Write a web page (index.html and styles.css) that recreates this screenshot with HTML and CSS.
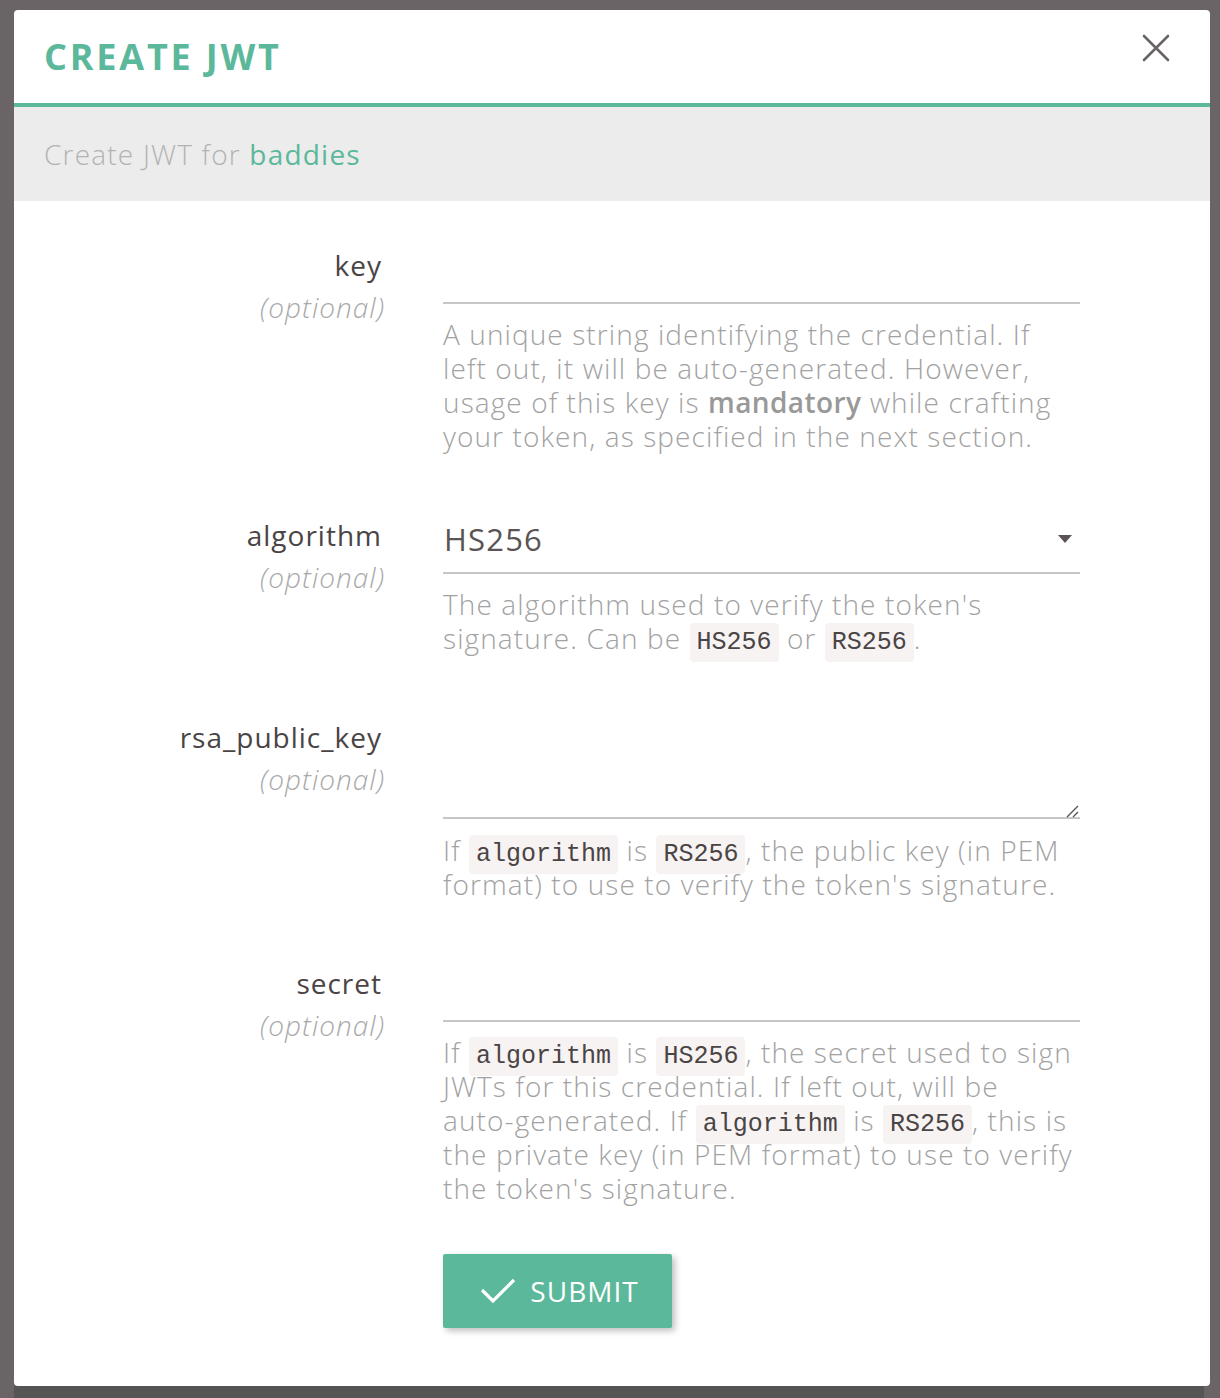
FILE: index.html
```html
<!DOCTYPE html>
<html lang="en">
<head>
<meta charset="utf-8">
<title>Create JWT</title>
<link rel="stylesheet" href="styles.css">
</head>
<body>
<div class="backdrop">
  <div class="modal">
    <header class="modal-head">
      <h1 class="modal-title">CREATE JWT</h1>
      <button class="close" type="button" aria-label="Close">
        <svg width="28" height="28" viewBox="0 0 28 28"><path d="M2 2 L26 26 M26 2 L2 26" stroke="#6a6466" stroke-width="2.6" stroke-linecap="round" fill="none"/></svg>
      </button>
    </header>
    <div class="modal-sub">Create JWT for <strong>baddies</strong></div>
    <form class="modal-body">
      <div class="field">
        <div class="label"><div class="name">key</div><div class="opt">(optional)</div></div>
        <div class="control">
          <input class="input" type="text">
          <p class="help">A unique string identifying the credential. If left out, it will be <span class="nw">auto-generated.</span> However, usage of this key is <b>mandatory</b> while crafting your token, as specified in the next section.</p>
        </div>
      </div>
      <div class="field">
        <div class="label"><div class="name">algorithm</div><div class="opt">(optional)</div></div>
        <div class="control">
          <div class="select"><span>HS256</span><svg class="caret" width="14" height="8" viewBox="0 0 14 8"><path d="M0 0 H14 L7 8 Z" fill="#5a5454"/></svg></div>
          <p class="help">The algorithm used to verify the token's signature. Can be <code>HS256</code> or <code>RS256</code>.</p>
        </div>
      </div>
      <div class="field">
        <div class="label"><div class="name">rsa_public_key</div><div class="opt">(optional)</div></div>
        <div class="control">
          <div class="textarea-wrap">
            <textarea class="textarea"></textarea>
            <svg class="grip" width="14" height="14" viewBox="0 0 14 14"><path d="M13 2 L2 13 M13 8 L8 13" stroke="#555" stroke-width="1.4" fill="none"/></svg>
          </div>
          <p class="help">If <code>algorithm</code> is <code>RS256</code>, the public key (in PEM format) to use to verify the token's signature.</p>
        </div>
      </div>
      <div class="field">
        <div class="label"><div class="name">secret</div><div class="opt">(optional)</div></div>
        <div class="control">
          <input class="input" type="text">
          <p class="help">If <code>algorithm</code> is <code>HS256</code>, the secret used to sign JWTs for this credential. If left out, will be <span class="nw">auto-generated.</span> If <code>algorithm</code> is <code>RS256</code>, this is the private key (in PEM format) to use to verify the token's signature.</p>
        </div>
      </div>
      <div class="actions">
        <button class="submit" type="button">
          <svg width="36" height="28" viewBox="0 0 36 28"><path d="M2 13 L13 24 L34 3" stroke="#fff" stroke-width="3.2" fill="none"/></svg>
          <span>SUBMIT</span>
        </button>
      </div>
    </form>
  </div>
  <div class="bottom-strip"></div>
</div>
</body>
</html>
```
FILE: styles.css
```css
html, body {
  margin: 0;
  padding: 0;
}
body {
  background: #6b6466;
  height: 1398px;
  overflow: hidden;
  font-family: "Open Sans", Lato, sans-serif;
}
.backdrop {
  padding: 10px 10px 0 14px;
}
.modal {
  background: #fff;
  width: 1196px;
  height: 1376px;
  border-radius: 4px;
  overflow: hidden;
  box-sizing: border-box;
}
.bottom-strip {
  height: 12px;
  background: #555555;
  margin-right: 6px;
}
.modal-head {
  height: 97px;
  box-sizing: border-box;
  border-bottom: 4px solid #5bb89b;
  padding: 0 40px 0 30px;
  display: flex;
  justify-content: space-between;
  align-items: center;
}
.modal-title {
  margin: 0;
  font-family: "Open Sans", sans-serif;
  font-weight: 700;
  font-size: 36px;
  letter-spacing: 2.8px;
  color: #5bb89b;
  line-height: 1;
}
.close {
  align-self: flex-start;
  margin-top: 24px;
  padding: 0;
  border: 0;
  background: none;
  width: 28px;
  height: 28px;
  display: block;
}
.close svg { display: block; }
.modal-sub {
  height: 94px;
  background: #ececec;
  padding-left: 30px;
  display: flex;
  align-items: center;
  font-size: 28px;
  font-weight: 300;
  letter-spacing: 1.2px;
  color: #b3b3b3;
  white-space: pre;
}
.modal-sub strong {
  color: #5bb89b;
  font-weight: 500;
}
.modal-body {
  padding: 43px 0 60px;
}
.field {
  display: grid;
  grid-template-columns: 368px 637px;
  column-gap: 61px;
}
.field + .field {
  margin-top: 61px;
}
.label {
  text-align: right;
  font-size: 28px;
  line-height: 42px;
  letter-spacing: 1px;
}
.name {
  color: #4a4445;
  font-weight: 500;
}
.opt {
  color: #a9a9a9;
  font-style: italic;
  font-weight: 300;
  margin-right: -3px;
}
.control {
  min-width: 0;
}
.input {
  display: block;
  width: 100%;
  height: 60px;
  box-sizing: border-box;
  border: 0;
  border-bottom: 2px solid #c6c6c6;
  padding: 0;
  margin: 0;
  font: inherit;
  outline: none;
  background: transparent;
}
.select {
  height: 60px;
  box-sizing: border-box;
  border-bottom: 2px solid #c6c6c6;
  padding: 0 8px 8px 1px;
  display: flex;
  align-items: center;
  justify-content: space-between;
  font-size: 31px;
  letter-spacing: 1.2px;
  color: #5a5454;
}
.caret { display: block; }
.textarea-wrap {
  position: relative;
}
.textarea {
  display: block;
  width: 100%;
  height: 103px;
  box-sizing: border-box;
  border: 0;
  border-bottom: 2px solid #c6c6c6;
  padding: 0;
  margin: 0;
  resize: none;
  outline: none;
  font: inherit;
}
.grip {
  position: absolute;
  right: 1px;
  bottom: 1px;
}
.help {
  margin: 13px 0 0;
  font-size: 28px;
  line-height: 34px;
  font-weight: 300;
  letter-spacing: 1.1px;
  color: #a2a2a2;
}
.nw { white-space: nowrap; }
.textarea-wrap + .help {
  margin-top: 14px;
}
.help b {
  font-weight: 600;
  color: #999;
  letter-spacing: 0.4px;
}
.help code {
  font-family: "Liberation Mono", "DejaVu Sans Mono", monospace;
  font-size: 25px;
  line-height: 1;
  letter-spacing: 0;
  color: #4a4445;
  background: #f8f3f3;
  border-radius: 4px;
  padding: 5px 7px;
}
.actions {
  margin-top: 49px;
  padding-left: 429px;
}
.submit {
  width: 229px;
  height: 74px;
  border: 0;
  border-radius: 2px;
  background: #5bb89b;
  color: #fff;
  display: flex;
  align-items: center;
  justify-content: center;
  gap: 14px;
  font-family: "Open Sans", sans-serif;
  font-size: 28px;
  font-weight: 500;
  letter-spacing: 1px;
  padding: 0 0 0 4px;
  box-shadow: 3px 3px 6px rgba(0, 0, 0, 0.25);
}
.submit svg { display: block; }
```
